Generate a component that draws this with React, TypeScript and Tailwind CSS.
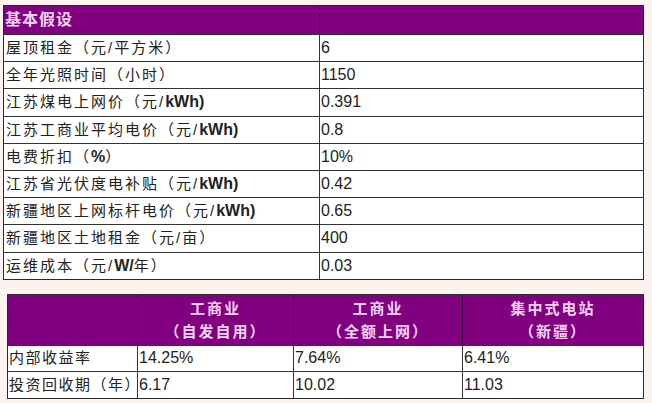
import React from 'react';

const font = { fontFamily: '"Liberation Sans", "Noto Sans CJK SC", sans-serif' };

type Row = { cn: string; latin?: string; tail?: string; value: string };

const rows: Row[] = [
  { cn: '屋顶租金（元/平方米）', value: '6' },
  { cn: '全年光照时间（小时）', value: '1150' },
  { cn: '江苏煤电上网价（元/', latin: 'kWh)', value: '0.391' },
  { cn: '江苏工商业平均电价（元/', latin: 'kWh)', value: '0.8' },
  { cn: '电费折扣（', latin: '%', tail: '）', value: '10%' },
  { cn: '江苏省光伏度电补贴（元/', latin: 'kWh)', value: '0.42' },
  { cn: '新疆地区上网标杆电价（元/', latin: 'kWh)', value: '0.65' },
  { cn: '新疆地区土地租金（元/亩）', value: '400' },
  { cn: '运维成本（元/', latin: 'W/', tail: '年）', value: '0.03' },
];

const heads = [
  ['工商业', '（自发自用）'],
  ['工商业', '（全额上网）'],
  ['集中式电站', '（新疆）'],
];

const results = [
  { label: '内部收益率', values: ['14.25%', '7.64%', '6.41%'] },
  { label: '投资回收期（年）', values: ['6.17', '10.02', '11.03'] },
];

function Label({ r }: { r: Row }) {
  return (
    <span className="tracking-[2px] text-[15px] text-[#222]">
      {r.cn}
      {r.latin && <span className="tracking-normal text-[16px] font-bold">{r.latin}</span>}
      {r.tail}
    </span>
  );
}

export default function App() {
  return (
    <div className="w-[652px] h-[403px] bg-[#fcf3ee] overflow-hidden" style={font}>
      <div className="pt-[5px] pl-[3px]">
        {/* 基本假设 */}
        <div className="w-[641px] border border-[#2a2a2a]">
          <div className="flex h-[28px] bg-[#800080]">
            <div className="w-[316px] border-r border-[#3a103a] flex items-center pl-[1px]">
              <span className="text-[16px] font-bold tracking-[1px] text-[#f5d5f5]">基本假设</span>
            </div>
            <div className="flex-1" />
          </div>
          {rows.map((r) => (
            <div key={r.cn + r.value} className="flex h-[27.2px] bg-white border-t border-[#333]">
              <div className="w-[316px] border-r border-[#333] flex items-center pl-[2px]">
                <Label r={r} />
              </div>
              <div className="flex-1 flex items-center pl-[1px] text-[16px] text-[#222]">{r.value}</div>
            </div>
          ))}
        </div>

        {/* 收益 */}
        <div className="mt-[14px] ml-[4px] w-[637px] border border-[#2a2a2a]">
          <div className="flex h-[50px] bg-[#800080]">
            <div className="w-[130px] border-r border-[#3a103a]" />
            {heads.map((h, i) => (
              <div
                key={i}
                className={`${i === 0 ? 'w-[156px]' : i === 1 ? 'w-[169px]' : 'flex-1'} ${i < 2 ? 'border-r border-[#3a103a]' : ''} flex flex-col items-center justify-center gap-[2px] text-[15px] font-bold tracking-[2px] text-[#f5d5f5] leading-[21px]`}
              >
                <span>{h[0]}</span>
                <span>{h[1]}</span>
              </div>
            ))}
          </div>
          {results.map((r) => (
            <div key={r.label} className="flex h-[26.5px] bg-white border-t border-[#333]">
              <div className="w-[130px] border-r border-[#333] flex items-center pl-[1px] text-[15px] tracking-[1.5px] text-[#222] whitespace-nowrap">
                {r.label}
              </div>
              {r.values.map((v, i) => (
                <div
                  key={i}
                  className={`${i === 0 ? 'w-[156px]' : i === 1 ? 'w-[169px]' : 'flex-1'} ${i < 2 ? 'border-r border-[#333]' : ''} flex items-center pl-[1px] text-[16px] text-[#222]`}
                >
                  {v}
                </div>
              ))}
            </div>
          ))}
        </div>
      </div>
    </div>
  );
}
